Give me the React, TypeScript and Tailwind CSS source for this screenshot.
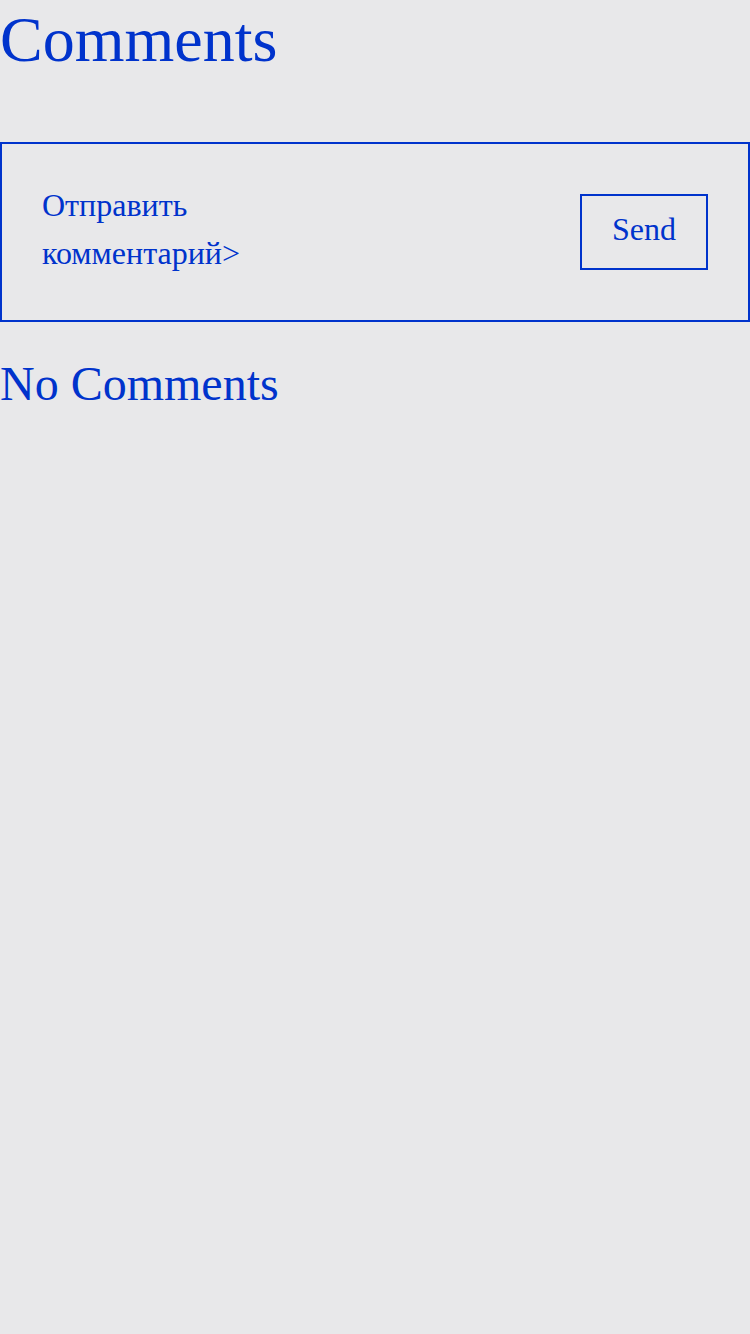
import React from 'react';

const App = () => {
    return (
        <div className="min-h-[1334px] bg-[#e8e8ea] text-[#0033cc] font-['Liberation_Serif',serif]">
            <h1 className="text-[64px] leading-[80px]">Comments</h1>
            <div className="mt-[62px] border-2 border-[#0033cc] px-10 py-[37px] flex items-center justify-between">
                <p className="text-[32px] leading-[48px] w-[220px] pb-[6px]">Отправить комментарий&gt;</p>
                <button className="border-2 border-[#0033cc] px-[30px] pt-[15px] pb-[21px] text-[32px] leading-[36px]">Send</button>
            </div>
            <h2 className="mt-[34px] text-[48px] leading-[56px]">No Comments</h2>
        </div>
    );
};

export default App;
